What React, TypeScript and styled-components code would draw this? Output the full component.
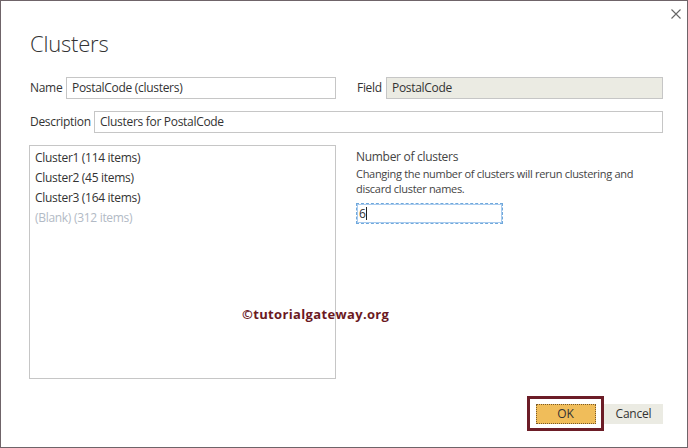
import React from "react";
import styled, { createGlobalStyle } from "styled-components";

const Global = createGlobalStyle`
  html, body { margin: 0; padding: 0; background: #ffffff; }
  body { font-family: "Open Sans", "Noto Sans", sans-serif; color: #333; }
  * { box-sizing: border-box; }
`;

const Dialog = styled.div`
  position: relative;
  width: 688px;
  height: 448px;
  border: 1px solid #6f6469;
  background: #fff;
  padding: 0 24px 0 28px;
  display: flex;
  flex-direction: column;
`;

const CloseRow = styled.div`
  display: flex;
  justify-content: flex-end;
  padding-top: 8px;
  margin-right: -18px;
`;

const CloseButton = styled.button`
  width: 10px;
  height: 10px;
  padding: 0;
  border: 0;
  background: none;
  display: block;
  cursor: pointer;
  svg { display: block; }
`;

const Title = styled.h1`
  margin: 9px 0 0 1px;
  font-family: "Open Sans", sans-serif;
  font-weight: 300;
  font-size: 22px;
  line-height: 30px;
  letter-spacing: -0.2px;
  color: #333;
`;

const TwoCol = styled.div<{ $top: number }>`
  display: grid;
  grid-template-columns: 307px 1fr;
  column-gap: 20px;
  margin-top: ${(p) => p.$top}px;
`;

const FieldRow = styled.div<{ $top?: number }>`
  display: flex;
  align-items: center;
  margin-top: ${(p) => p.$top ?? 0}px;
`;

const Label = styled.label`
  flex: 1;
  padding-left: 1px;
  font-size: 12px;
  line-height: 16px;
  letter-spacing: -0.3px;
  color: #333;
  white-space: nowrap;
`;

const TextBox = styled.div<{ $w: number; $readonly?: boolean }>`
  width: ${(p) => p.$w}px;
  height: 22px;
  border: 1px solid #c6c6c6;
  background: ${(p) => (p.$readonly ? "#ebebe3" : "#fff")};
  padding: 0 5px;
  font-size: 12px;
  line-height: 20px;
  letter-spacing: -0.3px;
  color: #333;
  white-space: nowrap;
  overflow: hidden;
`;

const ListBox = styled.ul`
  margin: 0;
  padding: 2px 0 0 5px;
  list-style: none;
  height: 234px;
  border: 1px solid #c6c6c6;
`;

const ListItem = styled.li<{ $muted?: boolean }>`
  font-size: 12px;
  line-height: 20px;
  letter-spacing: -0.3px;
  color: ${(p) => (p.$muted ? "#b2bac5" : "#333")};
`;

const Panel = styled.div`
  padding-top: 4px;
  display: flex;
  flex-direction: column;
  align-items: flex-start;
`;

const PanelHeading = styled.div`
  font-size: 12px;
  line-height: 16px;
  letter-spacing: -0.3px;
  color: #444;
`;

const PanelText = styled.p`
  margin: 1px 0 0;
  font-size: 11px;
  line-height: 15px;
  letter-spacing: -0.3px;
  color: #444;
  width: 300px;
`;

const NumberBox = styled.div`
  margin-top: 7px;
  width: 147px;
  height: 21px;
  border: 1px dashed #6fa8dc;
  outline: 1px solid #a9cbee;
  outline-offset: -2px;
  padding: 0 2px;
  font-size: 12px;
  line-height: 19px;
  color: #333;
  display: flex;
  align-items: center;
`;

const Caret = styled.span`
  display: inline-block;
  width: 1px;
  height: 13px;
  background: #222;
`;

const Footer = styled.div`
  margin-top: 17px;
  display: flex;
  justify-content: flex-end;
  align-items: center;
`;

const Highlight = styled.div`
  width: 77px;
  height: 35px;
  border: 3px solid #6c1d27;
  display: flex;
  align-items: center;
  justify-content: center;
`;

const Button = styled.button<{ $primary?: boolean }>`
  width: ${(p) => (p.$primary ? 60 : 59)}px;
  height: 20px;
  margin: 0;
  padding: 0;
  font-family: "Open Sans", sans-serif;
  font-size: 12px;
  line-height: 18px;
  letter-spacing: -0.2px;
  color: #333;
  background: ${(p) => (p.$primary ? "#f0bd5a" : "#ebebe3")};
  border: 1px ${(p) => (p.$primary ? "dotted #7a5a2a" : "solid #ebebe3")};
`;

const Watermark = styled.div`
  position: absolute;
  left: 241px;
  top: 304px;
  font-family: "Open Sans", sans-serif;
  font-weight: 700;
  font-size: 13px;
  line-height: 18px;
  letter-spacing: 0.35px;
  color: #6b1a1f;
  pointer-events: none;
`;

export default function App() {
  return (
    <>
      <Global />
      <Dialog>
        <CloseRow>
          <CloseButton aria-label="Close">
            <svg width="10" height="10" viewBox="0 0 10 10">
              <path d="M0.5 0.5 L9.5 9.5 M9.5 0.5 L0.5 9.5" stroke="#666" strokeWidth="1.1" />
            </svg>
          </CloseButton>
        </CloseRow>
        <Title>Clusters</Title>
        <TwoCol $top={19}>
          <FieldRow>
            <Label>Name</Label>
            <TextBox $w={270}>PostalCode (clusters)</TextBox>
          </FieldRow>
          <FieldRow>
            <Label>Field</Label>
            <TextBox $w={277} $readonly>PostalCode</TextBox>
          </FieldRow>
        </TwoCol>
        <FieldRow $top={12}>
          <Label>Description</Label>
          <TextBox $w={569}>Clusters for PostalCode</TextBox>
        </FieldRow>
        <TwoCol $top={12}>
          <ListBox>
            <ListItem>Cluster1 (114 items)</ListItem>
            <ListItem>Cluster2 (45 items)</ListItem>
            <ListItem>Cluster3 (164 items)</ListItem>
            <ListItem $muted>(Blank) (312 items)</ListItem>
          </ListBox>
          <Panel>
            <PanelHeading>Number of clusters</PanelHeading>
            <PanelText>
              Changing the number of clusters will rerun clustering and discard cluster names.
            </PanelText>
            <NumberBox>
              6<Caret />
            </NumberBox>
          </Panel>
        </TwoCol>
        <Footer>
          <Highlight>
            <Button $primary>OK</Button>
          </Highlight>
          <Button>Cancel</Button>
        </Footer>
        <Watermark>©tutorialgateway.org</Watermark>
      </Dialog>
    </>
  );
}
